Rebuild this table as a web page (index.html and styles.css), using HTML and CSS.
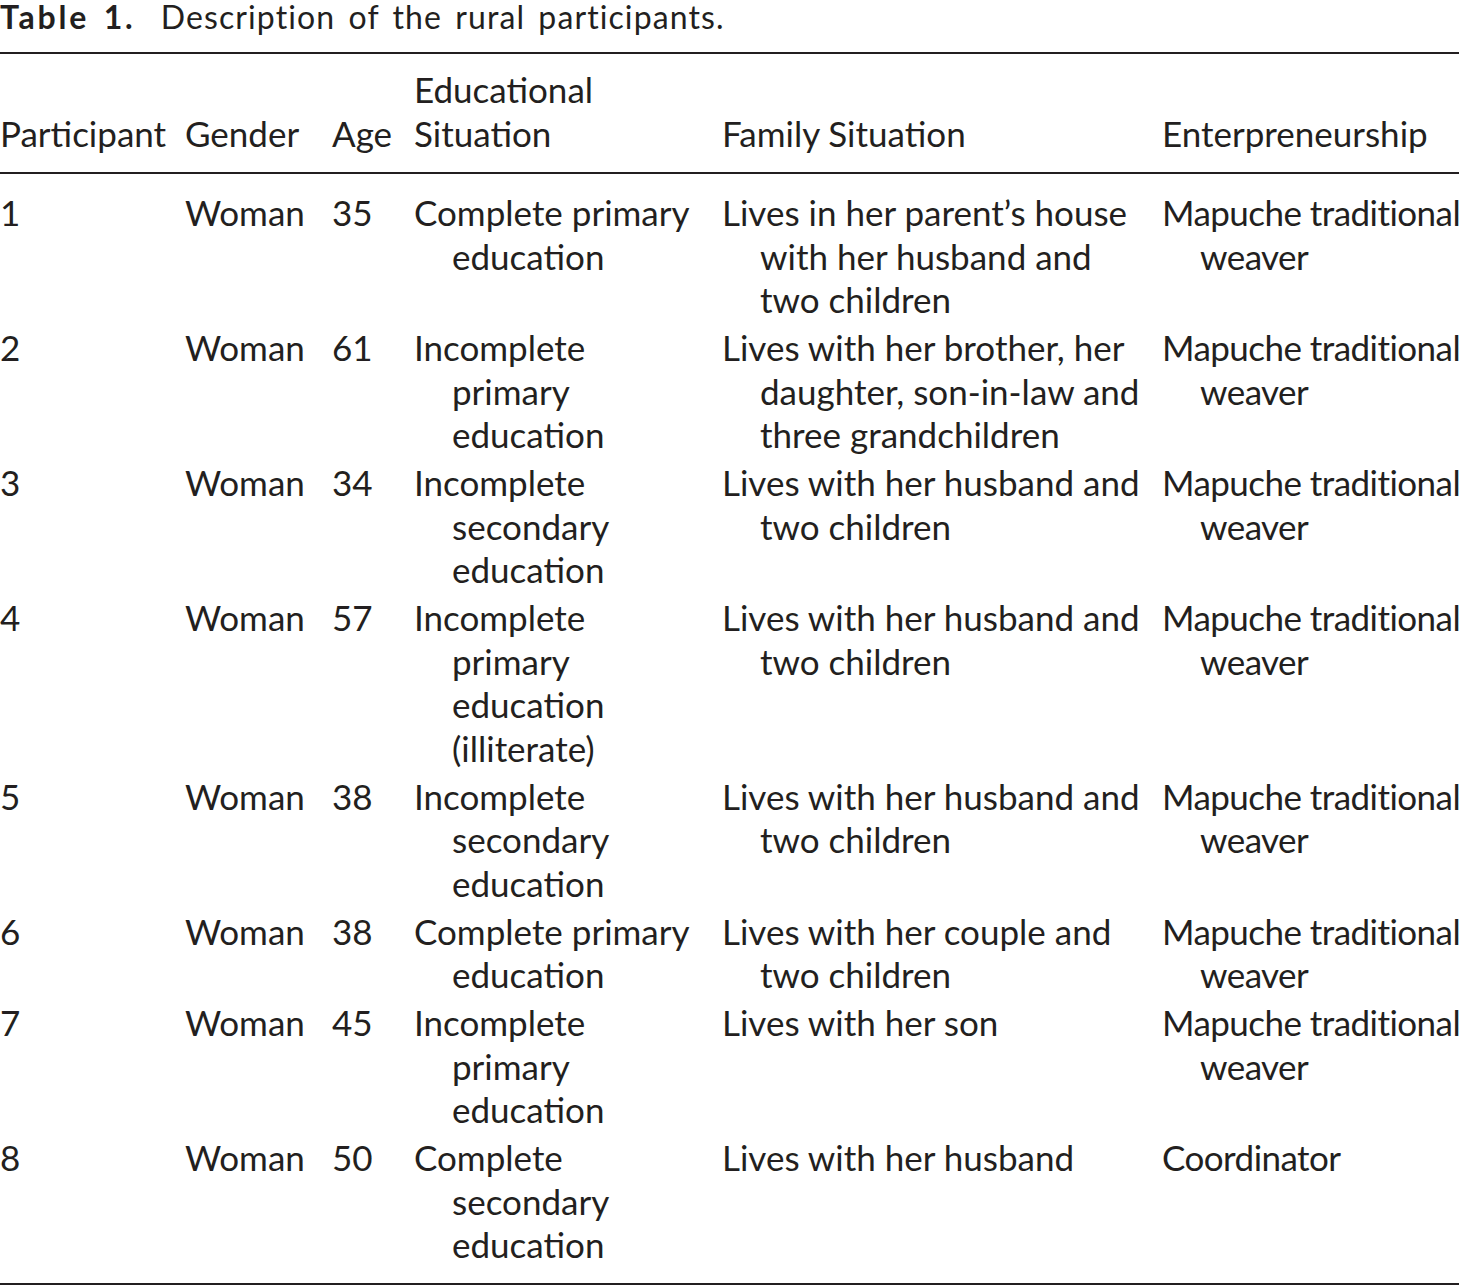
FILE: index.html
```html
<!DOCTYPE html>
<html lang="en">
<head>
<meta charset="utf-8">
<title>Table 1. Description of the rural participants.</title>
<link rel="stylesheet" href="styles.css">
</head>
<body>
<div class="caption"><span class="label">Table 1.</span> Description of the rural participants.</div>
<table class="data">
  <colgroup>
    <col class="c1"><col class="c2"><col class="c3"><col class="c4"><col class="c5"><col class="c6">
  </colgroup>
  <thead>
    <tr>
      <th>Participant</th>
      <th>Gender</th>
      <th>Age</th>
      <th>Educational<br>Situation</th>
      <th>Family Situation</th>
      <th>Enterpreneurship</th>
    </tr>
  </thead>
  <tbody>
    <tr>
      <td>1</td><td>Woman</td><td>35</td>
      <td class="hang">Complete primary<br>education</td>
      <td class="hang">Lives in her parent’s house<br>with her husband and<br>two children</td>
      <td class="hang last">Mapuche traditional<br>weaver</td>
    </tr>
    <tr>
      <td>2</td><td>Woman</td><td>61</td>
      <td class="hang">Incomplete<br>primary<br>education</td>
      <td class="hang">Lives with her brother, her<br>daughter, son-in-law and<br>three grandchildren</td>
      <td class="hang last">Mapuche traditional<br>weaver</td>
    </tr>
    <tr>
      <td>3</td><td>Woman</td><td>34</td>
      <td class="hang">Incomplete<br>secondary<br>education</td>
      <td class="hang">Lives with her husband and<br>two children</td>
      <td class="hang last">Mapuche traditional<br>weaver</td>
    </tr>
    <tr>
      <td>4</td><td>Woman</td><td>57</td>
      <td class="hang">Incomplete<br>primary<br>education<br>(illiterate)</td>
      <td class="hang">Lives with her husband and<br>two children</td>
      <td class="hang last">Mapuche traditional<br>weaver</td>
    </tr>
    <tr>
      <td>5</td><td>Woman</td><td>38</td>
      <td class="hang">Incomplete<br>secondary<br>education</td>
      <td class="hang">Lives with her husband and<br>two children</td>
      <td class="hang last">Mapuche traditional<br>weaver</td>
    </tr>
    <tr>
      <td>6</td><td>Woman</td><td>38</td>
      <td class="hang">Complete primary<br>education</td>
      <td class="hang">Lives with her couple and<br>two children</td>
      <td class="hang last">Mapuche traditional<br>weaver</td>
    </tr>
    <tr>
      <td>7</td><td>Woman</td><td>45</td>
      <td class="hang">Incomplete<br>primary<br>education</td>
      <td class="hang">Lives with her son</td>
      <td class="hang last">Mapuche traditional<br>weaver</td>
    </tr>
    <tr>
      <td>8</td><td>Woman</td><td>50</td>
      <td class="hang">Complete<br>secondary<br>education</td>
      <td class="hang">Lives with her husband</td>
      <td class="hang last">Coordinator</td>
    </tr>
  </tbody>
</table>
</body>
</html>
```
FILE: styles.css
```css
html, body {
  margin: 0;
  padding: 0;
  background: #ffffff;
}
body {
  color: #231f20;
  font-family: Lato, "Open Sans", "DejaVu Sans", sans-serif;
  overflow: hidden;
}
.caption {
  font-size: 32px;
  line-height: 34px;
  height: 34px;
  margin: 0 0 18px 0;
  letter-spacing: 1.1px;
  word-spacing: 4px;
  white-space: nowrap;
}
.caption .label {
  font-weight: 700;
  letter-spacing: 2.8px;
  margin-right: 12px;
}
.data {
  width: 1459px;
  table-layout: fixed;
  border-collapse: collapse;
  border-top: 2px solid #231f20;
  border-bottom: 3px solid #231f20;
  font-size: 35px;
  line-height: 43.5px;
}
.c1 { width: 185px; }
.c2 { width: 147px; }
.c3 { width: 82px; }
.c4 { width: 308px; }
.c5 { width: 440px; }
.c6 { width: 297px; }
.data th {
  font-weight: 400;
  text-align: left;
  vertical-align: bottom;
  padding: 14px 0 17px 0;
  border-bottom: 2px solid #231f20;
  white-space: nowrap;
}
.data td {
  text-align: left;
  vertical-align: top;
  padding: 0 0 4.5px 0;
  white-space: nowrap;
}
.data tbody tr:first-child td {
  padding-top: 17px;
}
.data tbody tr:last-child td {
  padding-bottom: 16.5px;
}
.data td.hang {
  padding-left: 38px;
  text-indent: -38px;
}
.data td.last {
  letter-spacing: -0.55px;
}
```
